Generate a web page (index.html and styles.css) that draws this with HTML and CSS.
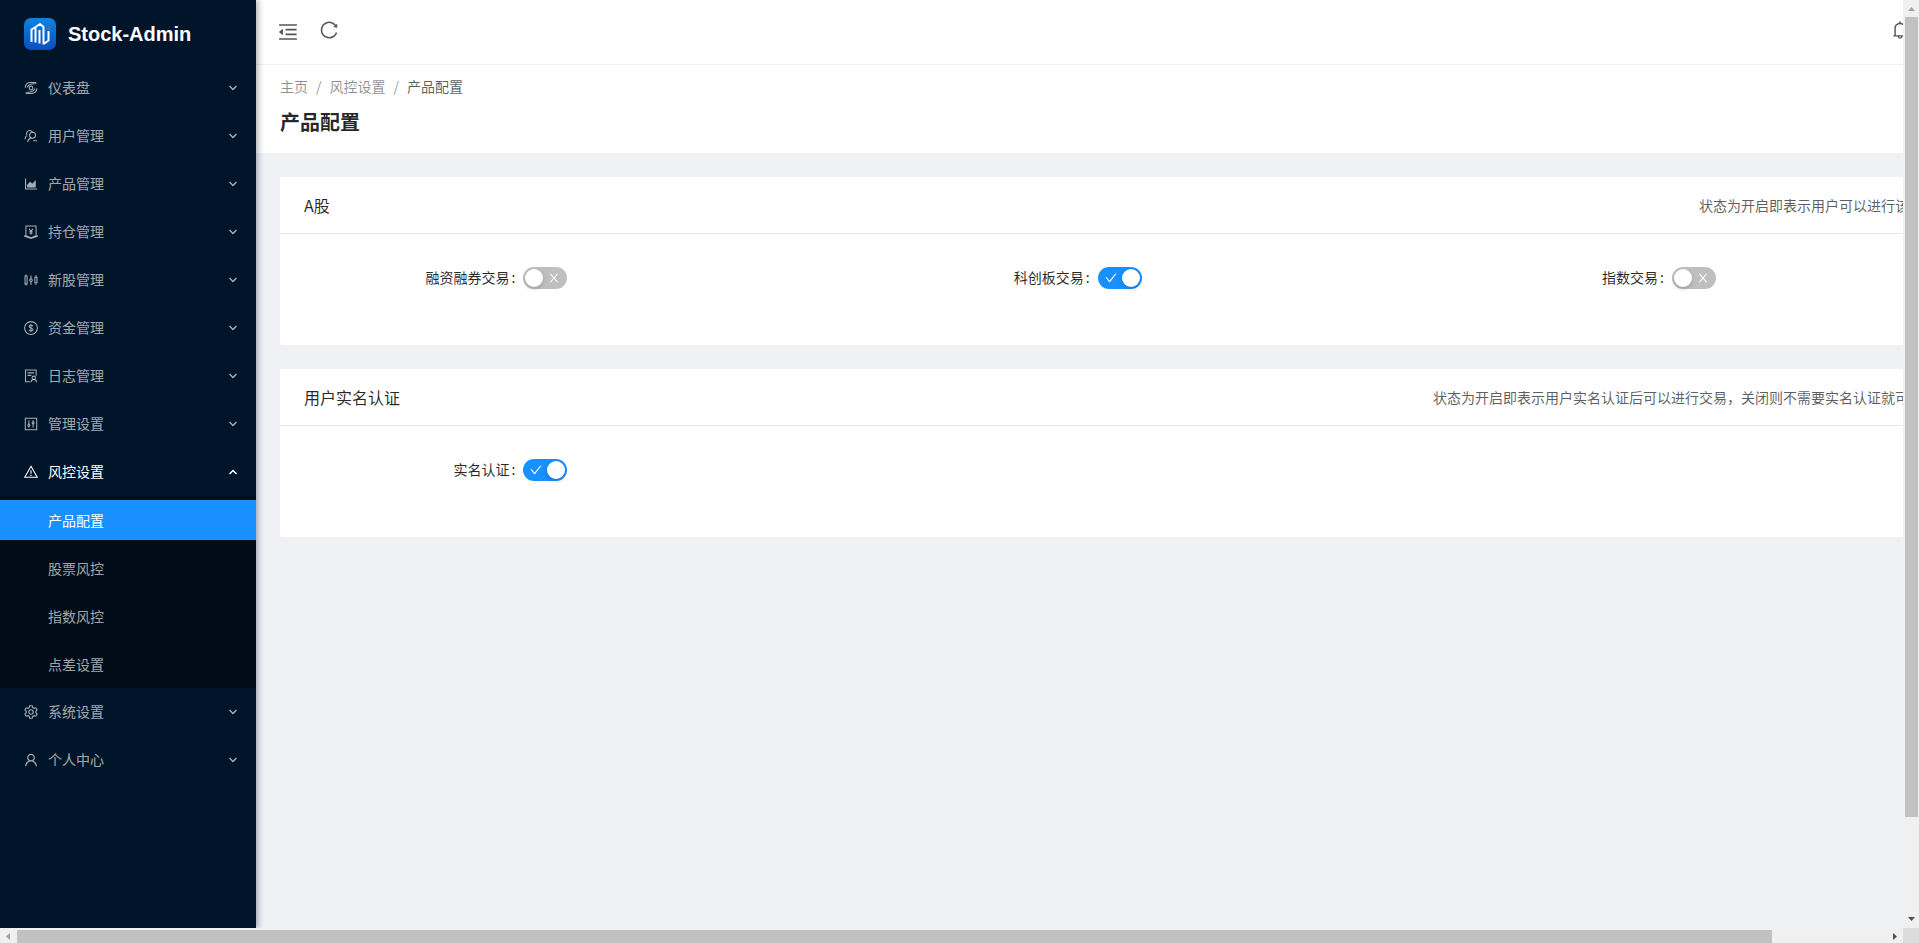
FILE: index.html
```html
<!DOCTYPE html>
<html lang="zh-CN">
<head>
  <meta charset="UTF-8">
  <meta name="viewport" content="width=device-width, initial-scale=1.0">
  <title>产品配置 - Stock-Admin</title>
  <link rel="stylesheet" href="styles.css">
</head>
<body>
  <div class="window">
    <div class="viewport">
      <div class="layout">
        <aside class="sider">
          <a class="logo" href="#">
            <svg class="logo-img" viewBox="0 0 32 32">
              <defs>
                <linearGradient id="logoBg" x1="0" y1="0" x2="0" y2="1">
                  <stop offset="0" stop-color="#0c84e0"/>
                  <stop offset="1" stop-color="#0a4fc0"/>
                </linearGradient>
              </defs>
              <rect width="32" height="32" rx="7" fill="url(#logoBg)"/>
              <path d="M7.500 24V11.500L11.500 9v15.500M11.500 9L16 6l3.500 3v17.500M15.500 12v13.500M19.500 26l5-3.500V13" fill="none" stroke="#fff" stroke-width="2" stroke-linejoin="round"/>
              <path d="M22 10.500l3-1.500v3" fill="none" stroke="#6a6f8f"/>
            </svg>
            <h1 class="logo-title">Stock-Admin</h1>
          </a>

          <nav class="menu">
            <button class="menu-item" type="button">
              <svg class="icon" viewBox="64 64 896 896"><g class="line"><path d="M140 490C150 270 300 165 500 165h340M884 534c-10 220-160 325-360 325H184M270 780C470 800 650 740 760 560M754 244C554 224 374 284 264 464M780 165l60 90M244 859l-60-90"/><circle cx="512" cy="512" r="120"/></g></svg>
              <span class="menu-text">仪表盘</span>
              <svg class="arrow" viewBox="0 0 10 10"><path d="M1.500 3l3.500 3.500L8.500 3"/></svg>
            </button>
            <button class="menu-item" type="button">
              <svg class="icon" viewBox="64 64 896 896"><g class="line"><path d="M260 470a200 200 0 1 1 350-190M260 470c-80 60-130 150-140 250"/><circle cx="610" cy="460" r="190"/><path d="M500 620c-120 60-190 150-200 280M660 820h240"/></g></svg>
              <span class="menu-text">用户管理</span>
              <svg class="arrow" viewBox="0 0 10 10"><path d="M1.500 3l3.500 3.500L8.500 3"/></svg>
            </button>
            <button class="menu-item" type="button">
              <svg class="icon" viewBox="64 64 896 896"><path d="M888 792H200V168c0-4.400-3.600-8-8-8h-56c-4.400 0-8 3.600-8 8v688c0 4.400 3.600 8 8 8h752c4.400 0 8-3.600 8-8v-56c0-4.400-3.600-8-8-8zm-616-64h536c4.400 0 8-3.600 8-8V284c0-7.200-8.700-10.700-13.700-5.700L592 488.600l-125.400-124a8.030 8.030 0 0 0-11.300 0l-189 189.600a7.870 7.870 0 0 0-2.300 5.600V720c0 4.400 3.600 8 8 8z"/></svg>
              <span class="menu-text">产品管理</span>
              <svg class="arrow" viewBox="0 0 10 10"><path d="M1.500 3l3.500 3.500L8.500 3"/></svg>
            </button>
            <button class="menu-item" type="button">
              <svg class="icon" viewBox="64 64 896 896"><g class="line"><path d="M188 130h648v620L512 880 188 750zM110 720v70l402 130 402-130v-70"/><path d="M400 310l112 170 112-170M512 480v190M410 500h204M410 590h204"/></g></svg>
              <span class="menu-text">持仓管理</span>
              <svg class="arrow" viewBox="0 0 10 10"><path d="M1.500 3l3.500 3.500L8.500 3"/></svg>
            </button>
            <button class="menu-item" type="button">
              <svg class="icon" viewBox="64 64 896 896"><g class="line"><path d="M130 260h130v500H130zM195 160v100M195 760v100M764 330h130v360H764zM829 200v130M829 690v130M512 220v200M512 620v200"/><circle cx="512" cy="520" r="80"/></g></svg>
              <span class="menu-text">新股管理</span>
              <svg class="arrow" viewBox="0 0 10 10"><path d="M1.500 3l3.500 3.500L8.500 3"/></svg>
            </button>
            <button class="menu-item" type="button">
              <svg class="icon" viewBox="64 64 896 896"><g class="line"><circle cx="512" cy="512" r="410"/><path d="M625 410c-10-60-50-90-113-90-70 0-115 35-115 90 0 130 235 65 235 205 0 60-50 95-120 95s-115-35-120-100M512 250v524"/></g></svg>
              <span class="menu-text">资金管理</span>
              <svg class="arrow" viewBox="0 0 10 10"><path d="M1.500 3l3.500 3.500L8.500 3"/></svg>
            </button>
            <button class="menu-item" type="button">
              <svg class="icon" viewBox="64 64 896 896"><g class="line"><path d="M440 880H160V130h680v370M290 310h420M290 470h240"/><circle cx="690" cy="630" r="110"/><path d="M510 910c10-100 80-170 180-170s170 70 180 170"/></g></svg>
              <span class="menu-text">日志管理</span>
              <svg class="arrow" viewBox="0 0 10 10"><path d="M1.500 3l3.500 3.500L8.500 3"/></svg>
            </button>
            <button class="menu-item" type="button">
              <svg class="icon" viewBox="64 64 896 896"><g class="line"><path d="M146 146h732v732H146zM376 290v220M376 650v90M648 290v70M648 510v230"/><circle cx="376" cy="590" r="62"/><circle cx="648" cy="430" r="62"/></g></svg>
              <span class="menu-text">管理设置</span>
              <svg class="arrow" viewBox="0 0 10 10"><path d="M1.500 3l3.500 3.500L8.500 3"/></svg>
            </button>
            <button class="menu-item menu-item-open" type="button" aria-expanded="true">
              <svg class="icon" viewBox="64 64 896 896"><g class="line"><path d="M512 150l400 700H112zM512 400v230M512 690v76"/></g></svg>
              <span class="menu-text">风控设置</span>
              <svg class="arrow" viewBox="0 0 10 10"><path d="M1.500 7l3.500-3.500L8.500 7"/></svg>
            </button>
            <div class="submenu">
              <a class="submenu-item active" href="#">产品配置</a>
              <a class="submenu-item" href="#">股票风控</a>
              <a class="submenu-item" href="#">指数风控</a>
              <a class="submenu-item" href="#">点差设置</a>
            </div>
            <button class="menu-item" type="button">
              <svg class="icon" viewBox="64 64 896 896"><g class="line"><path d="M430 110h164l28 116 88 51 114-34 82 142-86 82v90l86 82-82 142-114-34-88 51-28 116H430l-28-116-88-51-114 34-82-142 86-82v-90l-86-82 82-142 114 34 88-51z"/><circle cx="512" cy="512" r="140"/></g></svg>
              <span class="menu-text">系统设置</span>
              <svg class="arrow" viewBox="0 0 10 10"><path d="M1.500 3l3.500 3.500L8.500 3"/></svg>
            </button>
            <button class="menu-item" type="button">
              <svg class="icon" viewBox="64 64 896 896"><path d="M858.500 763.600a374 374 0 0 0-80.600-119.500 375.630 375.630 0 0 0-119.500-80.600c-.4-.2-.8-.3-1.200-.5C719.500 518 760 444.700 760 362c0-137-111-248-248-248S264 225 264 362c0 82.700 40.500 156 102.800 201.100-.4.2-.8.3-1.200.5-44.800 18.900-85 46-119.500 80.600a375.630 375.630 0 0 0-80.600 119.500A371.700 371.700 0 0 0 136 901.800a8 8 0 0 0 8 8.200h60c4.400 0 7.900-3.500 8-7.800 2-77.200 33-149.500 87.800-204.300 56.700-56.700 132-87.900 212.200-87.900s155.500 31.200 212.200 87.900C779 752.700 810 825 812 902.200c.1 4.400 3.600 7.800 8 7.800h60a8 8 0 0 0 8-8.200c-1-47.800-10.900-94.300-29.500-138.200zM512 534c-45.900 0-89.100-17.900-121.600-50.400S340 407.900 340 362c0-45.900 17.900-89.100 50.400-121.600S466.100 190 512 190s89.100 17.900 121.600 50.400S684 316.100 684 362c0 45.900-17.900 89.100-50.400 121.600S557.900 534 512 534z"/></svg>
              <span class="menu-text">个人中心</span>
              <svg class="arrow" viewBox="0 0 10 10"><path d="M1.500 3l3.500 3.500L8.500 3"/></svg>
            </button>
          </nav>
        </aside>

        <div class="main">
          <header class="header">
            <button class="header-btn trigger" type="button" aria-label="收起菜单">
              <svg viewBox="64 64 896 896"><path d="M408 442h480c4.400 0 8-3.600 8-8v-56c0-4.400-3.600-8-8-8H408c-4.400 0-8 3.600-8 8v56c0 4.400 3.600 8 8 8zm-8 204c0 4.400 3.600 8 8 8h480c4.400 0 8-3.600 8-8v-56c0-4.400-3.600-8-8-8H408c-4.400 0-8 3.600-8 8v56zm504-486H120c-4.400 0-8 3.600-8 8v56c0 4.400 3.600 8 8 8h784c4.400 0 8-3.600 8-8v-56c0-4.400-3.600-8-8-8zm0 632H120c-4.400 0-8 3.600-8 8v56c0 4.400 3.600 8 8 8h784c4.400 0 8-3.600 8-8v-56c0-4.400-3.600-8-8-8zM115.400 518.900L271.700 642c5.800 4.600 14.400.5 14.400-6.900V388.900c0-7.400-8.500-11.500-14.400-6.900L115.400 505.100a8.740 8.740 0 0 0 0 13.800z"/></svg>
            </button>
            <button class="header-btn" type="button" aria-label="刷新">
              <svg viewBox="64 64 896 896"><path d="M909.100 209.300l-56.400 44.100C775.800 155.100 656.200 92 521.900 92 290 92 102.300 279.500 102 511.500 101.700 743.700 289.800 932 521.900 932c181.300 0 335.800-115 394.600-276.100 1.500-4.200-.7-8.900-4.900-10.300l-56.700-19.500a8 8 0 0 0-10.100 4.800c-1.800 5-3.800 10-5.900 14.900-17.300 41-42.100 77.800-73.700 109.400A344.770 344.770 0 0 1 655.900 829c-42.300 17.900-87.400 27-133.800 27-46.500 0-91.500-9.100-133.800-27A341.500 341.500 0 0 1 279 755.200a342.160 342.160 0 0 1-73.700-109.400c-17.900-42.400-27-87.400-27-133.900s9.100-91.500 27-133.900c17.300-41 42.100-77.800 73.700-109.400 31.600-31.600 68.400-56.400 109.300-73.800 42.300-17.900 87.400-27 133.800-27 46.500 0 91.500 9.100 133.800 27a341.500 341.500 0 0 1 109.300 73.800c9.900 9.900 19.200 20.400 27.800 31.400l-60.200 47a8 8 0 0 0 3 14.100l175.600 43c5 1.200 9.900-2.600 9.900-7.700l.8-180.900c-.1-6.600-7.800-10.300-13-6.200z"/></svg>
            </button>
            <button class="header-btn notice" type="button" aria-label="通知">
              <svg viewBox="64 64 896 896"><path d="M816 768h-24V428c0-141.100-104.300-257.700-240-277.100V112c0-22.100-17.900-40-40-40s-40 17.900-40 40v38.900c-135.700 19.400-240 136-240 277.100v340h-24c-17.700 0-32 14.300-32 32v32c0 4.400 3.600 8 8 8h216c0 61.800 50.200 112 112 112s112-50.200 112-112h216c4.400 0 8-3.600 8-8v-32c0-17.700-14.300-32-32-32zM512 888c-26.500 0-48-21.500-48-48h96c0 26.500-21.500 48-48 48zM304 768V428c0-55.600 21.600-107.800 60.900-147.100S456.400 220 512 220c55.600 0 107.800 21.600 147.100 60.900S720 372.400 720 428v340H304z"/></svg>
            </button>
          </header>

          <div class="page-header">
            <nav class="breadcrumb">
              <a href="#">主页</a><span class="separator">/</span><a href="#">风控设置</a><span class="separator">/</span><span class="current">产品配置</span>
            </nav>
            <h2 class="page-title">产品配置</h2>
          </div>

          <main class="content">
            <section class="card">
              <div class="card-head">
                <h3 class="card-title">A股</h3>
                <span class="card-extra">状态为开启即表示用户可以进行该产品的交易</span>
              </div>
              <div class="card-body">
                <div class="form-item">
                  <label class="form-label" for="margin">融资融券交易</label>
                  <span class="switch">
                    <input class="switch-input" type="checkbox" id="margin">
                    <svg class="switch-icon" viewBox="64 64 896 896"><path d="M563.800 512l262.500-312.900c4.400-5.200.7-13.100-6.100-13.100h-79.800c-4.700 0-9.200 2.100-12.300 5.700L511.600 449.800 295.100 191.700c-3-3.600-7.500-5.700-12.300-5.700H203c-6.800 0-10.500 7.900-6.100 13.100L459.400 512 196.900 824.900A7.950 7.950 0 0 0 203 838h79.800c4.700 0 9.200-2.100 12.300-5.700l216.500-258.100 216.500 258.100c3 3.600 7.500 5.700 12.300 5.700h79.800c6.800 0 10.500-7.900 6.100-13.100L563.800 512z"/></svg>
                  </span>
                </div>
                <div class="form-item">
                  <label class="form-label" for="star">科创板交易</label>
                  <span class="switch">
                    <input class="switch-input" type="checkbox" id="star" checked>
                    <svg class="switch-icon" viewBox="64 64 896 896"><path d="M912 190h-69.900c-9.800 0-19.100 4.500-25.100 12.200L404.700 724.500 207 474a32 32 0 0 0-25.100-12.200H112c-6.700 0-10.400 7.700-6.300 12.900l273.900 347c12.800 16.200 37.400 16.200 50.300 0l488.400-618.900c4.100-5.100.4-12.800-6.300-12.800z"/></svg>
                  </span>
                </div>
                <div class="form-item">
                  <label class="form-label" for="index">指数交易</label>
                  <span class="switch">
                    <input class="switch-input" type="checkbox" id="index">
                    <svg class="switch-icon" viewBox="64 64 896 896"><path d="M563.800 512l262.500-312.900c4.400-5.200.7-13.100-6.100-13.100h-79.800c-4.700 0-9.200 2.100-12.300 5.700L511.600 449.800 295.100 191.700c-3-3.600-7.500-5.700-12.300-5.700H203c-6.800 0-10.500 7.900-6.100 13.100L459.400 512 196.900 824.900A7.950 7.950 0 0 0 203 838h79.800c4.700 0 9.200-2.100 12.300-5.700l216.500-258.100 216.500 258.100c3 3.600 7.500 5.700 12.300 5.700h79.800c6.800 0 10.500-7.900 6.100-13.100L563.800 512z"/></svg>
                  </span>
                </div>
              </div>
            </section>

            <section class="card">
              <div class="card-head">
                <h3 class="card-title">用户实名认证</h3>
                <span class="card-extra">状态为开启即表示用户实名认证后可以进行交易，关闭则不需要实名认证就可以进行交易</span>
              </div>
              <div class="card-body">
                <div class="form-item">
                  <label class="form-label" for="realname">实名认证</label>
                  <span class="switch">
                    <input class="switch-input" type="checkbox" id="realname" checked>
                    <svg class="switch-icon" viewBox="64 64 896 896"><path d="M912 190h-69.900c-9.800 0-19.100 4.500-25.100 12.200L404.700 724.500 207 474a32 32 0 0 0-25.100-12.200H112c-6.700 0-10.400 7.700-6.300 12.900l273.900 347c12.800 16.200 37.400 16.200 50.300 0l488.400-618.900c4.100-5.100.4-12.800-6.300-12.800z"/></svg>
                  </span>
                </div>
              </div>
            </section>
          </main>
        </div>
      </div>
    </div>

    <div class="scrollbar scrollbar-y">
      <svg class="scroll-arrow disabled" viewBox="0 0 13 17"><path d="M3 11l3.500-4 3.500 4z"/></svg>
      <div class="thumb"></div>
      <div class="track"></div>
      <svg class="scroll-arrow" viewBox="0 0 13 17"><path d="M3 6h7l-3.500 4z"/></svg>
    </div>
    <div class="scrollbar scrollbar-x">
      <svg class="scroll-arrow disabled" viewBox="0 0 17 13"><path d="M10 3v7L6 6.500z"/></svg>
      <div class="thumb"></div>
      <div class="track"></div>
      <svg class="scroll-arrow" viewBox="0 0 17 13"><path d="M7 3v7l4-3.500z"/></svg>
    </div>
    <div class="scroll-corner"></div>
  </div>
</body>
</html>
```

FILE: styles.css
```css
* {
  box-sizing: border-box;
}

body {
  margin: 0;
  font-family: "Noto Sans CJK SC", sans-serif;
  font-size: 14px;
  color: rgba(0, 0, 0, .85);
}

h1, h2, h3 {
  margin: 0;
}

a {
  color: inherit;
  text-decoration: none;
}

button {
  border: none;
  padding: 0;
  background: none;
  font: inherit;
  color: inherit;
  cursor: pointer;
}

.window {
  display: grid;
  grid-template-columns: minmax(0, 1fr) 16px;
  grid-template-rows: minmax(0, 1fr) 15px;
  height: 100vh;
}

.viewport {
  overflow: hidden;
  background: #f0f1f5;
}

.layout {
  display: flex;
  width: calc(100% + 124px);
  min-height: 100%;
}

/* sider */
.sider {
  flex: none;
  width: 256px;
  background: #001529;
  box-shadow: 2px 0 6px rgba(0, 21, 41, .35);
  z-index: 1;
}

.logo {
  display: flex;
  align-items: center;
  height: 64px;
  padding: 4px 24px 0;
}

.logo-img {
  width: 32px;
  height: 32px;
}

.logo-title {
  margin-left: 12px;
  color: #fff;
  font-family: "Liberation Sans", Arial, sans-serif;
  font-size: 20px;
  font-weight: bold;
}

.menu {
  display: flex;
  flex-direction: column;
  color: rgba(255, 255, 255, .65);
}

.menu-item {
  display: flex;
  align-items: center;
  height: 40px;
  margin: 4px 0;
  padding: 0 18px 0 24px;
}

.menu-item-open {
  color: #fff;
}

.menu-text {
  flex: 1;
  margin-left: 10px;
  padding-bottom: 2px;
  text-align: left;
}

.icon {
  width: 14px;
  height: 14px;
  fill: currentColor;
}

.line {
  fill: none;
  stroke: currentColor;
  stroke-width: 68;
}

.arrow {
  width: 10px;
  height: 10px;
  fill: none;
  stroke: currentColor;
  stroke-width: 1.5;
}

.submenu {
  padding: 4px 0;
  display: flex;
  flex-direction: column;
  gap: 8px;
  background: #000c17;
}

.submenu-item {
  height: 40px;
  padding-left: 48px;
  line-height: 40px;
}

.submenu-item.active {
  background: #1890ff;
  color: #fff;
}

/* header */
.main {
  flex: 1;
  min-width: 0;
}

.header {
  display: flex;
  align-items: center;
  height: 64px;
  padding: 0 118px 0 22px;
  background: #fff;
}

.header-btn {
  display: flex;
  padding-bottom: 4px;
  margin-left: 22px;
}

.header-btn svg {
  width: 18px;
  height: 18px;
  fill: #555;
}

.trigger {
  padding: 0;
  margin-left: 0;
}

.trigger svg {
  width: 20px;
  height: 20px;
}

.notice {
  margin-left: auto;
}

.page-header {
  padding: 11px 24px 16px;
  border-top: 1px solid #f0f0f0;
  background: #fff;
}

.breadcrumb {
  margin-bottom: 11px;
  line-height: 20px;
  color: rgba(0, 0, 0, .45);
}

.separator {
  margin: 0 8px;
}

.current {
  color: rgba(0, 0, 0, .65);
}

.page-title {
  font-size: 20px;
  line-height: 30px;
}

/* cards */
.content {
  display: flex;
  flex-direction: column;
  gap: 24px;
  padding: 24px;
}

.card {
  background: #fff;
  border-radius: 2px;
}

.card-head {
  display: flex;
  align-items: center;
  justify-content: space-between;
  height: 57px;
  padding: 0 24px;
  border-bottom: 1px solid #e8e8e8;
}

.card-title {
  font-size: 16px;
  font-weight: normal;
}

.card-extra {
  color: rgba(0, 0, 0, .65);
}

.card-body {
  display: grid;
  grid-template-columns: repeat(3, 1fr);
  padding: 24px 0 47px;
}

.form-item {
  display: grid;
  grid-template-columns: 10fr 14fr;
  align-items: center;
  height: 40px;
  padding: 0 24px;
}

.form-label {
  padding-bottom: 2px;
  text-align: right;
}

.form-label::after {
  content: ":";
  margin: 0 8px 0 2px;
}

.switch {
  position: relative;
  width: 44px;
  height: 22px;
}

.switch-input {
  appearance: none;
  display: flex;
  width: 44px;
  height: 22px;
  margin: 0;
  padding: 2px;
  border-radius: 11px;
  background: #bfbfbf;
  cursor: pointer;
}

.switch-input::before {
  content: "";
  width: 18px;
  height: 18px;
  border-radius: 50%;
  background: #fff;
  box-shadow: 0 2px 4px rgba(0, 35, 11, .2);
}

.switch-input:checked {
  justify-content: flex-end;
  background: #1890ff;
}

.switch-icon {
  position: absolute;
  top: 5px;
  right: 7px;
  width: 12px;
  height: 12px;
  fill: #fff;
  pointer-events: none;
}

.switch-input:checked + .switch-icon {
  right: auto;
  left: 7px;
}

/* scrollbars */
.scrollbar {
  display: flex;
  background: #f0f0f0;
}

.scrollbar-y {
  flex-direction: column;
  padding: 0 1px 0 2px;
}

.scrollbar-x {
  padding: 2px 0 0;
}

.thumb {
  flex: 800;
  background: #c1c1c1;
}

.track {
  flex: 94;
}

.scrollbar-x .thumb {
  flex: 1755;
}

.scrollbar-x .track {
  flex: 114;
}

.scroll-arrow {
  flex: none;
  width: 100%;
  height: 17px;
  fill: #505050;
}

.scrollbar-x .scroll-arrow {
  width: 17px;
  height: 100%;
}

.scroll-arrow.disabled {
  fill: #a3a3a3;
}

.scroll-corner {
  background: #dcdcdc;
}
```
